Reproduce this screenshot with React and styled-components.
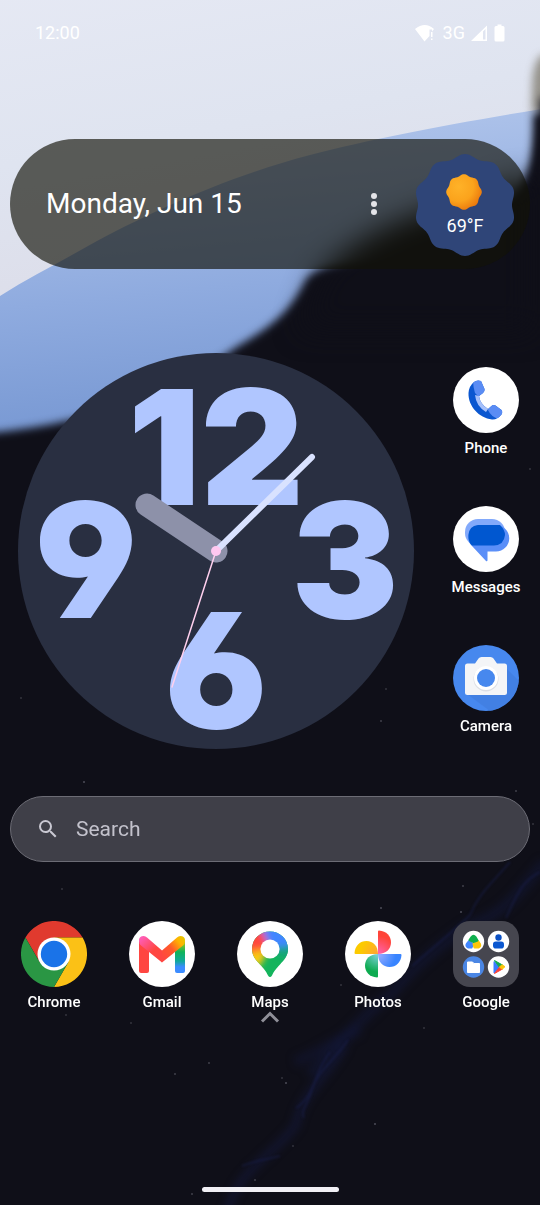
import styled, { createGlobalStyle } from "styled-components";

const GlobalStyle = createGlobalStyle`
  * {
    box-sizing: border-box;
  }
  body {
    margin: 0;
    background: #0f0f18;
    color: #fff;
    font-family: Roboto, "Liberation Sans", sans-serif;
  }
  button {
    font: inherit;
    color: inherit;
    background: none;
    border: none;
    padding: 0;
    cursor: pointer;
  }
`;

// rounded "cookie" outline: a circle whose radius waves a few times per turn
function cookiePath(cx, cy, radius, wave, bumps) {
  const points = [];
  for (let deg = 0; deg < 360; deg += 2) {
    const a = (deg * Math.PI) / 180;
    const r = radius + wave * Math.cos(bumps * a);
    points.push(
      `${(cx + r * Math.sin(a)).toFixed(2)} ${(cy - r * Math.cos(a)).toFixed(2)}`
    );
  }
  return `M${points.join("L")}Z`;
}

const stars = [
  [84, 782, 0.5],
  [516, 791, 0.4],
  [381, 908, 0.5],
  [463, 886, 0.4],
  [62, 889, 0.3],
  [341, 985, 0.3],
  [66, 1015, 0.3],
  [131, 1023, 0.3],
  [209, 1063, 0.4],
  [175, 1074, 0.4],
  [282, 1078, 0.3],
  [286, 1083, 0.5],
  [375, 1124, 0.5],
  [293, 1146, 0.3],
  [255, 1180, 0.4],
  [192, 1194, 0.4],
  [461, 912, 0.5],
  [386, 689, 0.3],
  [381, 721, 0.4],
  [21, 698, 0.3],
  [530, 469, 0.3],
  [424, 1028, 0.3],
  [533, 824, 0.3],
];

function Blur({ id, amount }) {
  return (
    <filter
      id={id}
      filterUnits="userSpaceOnUse"
      x="-40"
      y="-40"
      width="620"
      height="1285"
      colorInterpolationFilters="sRGB"
    >
      <feGaussianBlur stdDeviation={amount} />
    </filter>
  );
}

function Wallpaper() {
  return (
    <Backdrop
      viewBox="0 0 540 1205"
      preserveAspectRatio="xMidYMin slice"
      aria-hidden="true"
    >
      <defs>
        <linearGradient id="sky" x1="0" y1="0" x2="0.3" y2="1">
          <stop offset="0" stopColor="#e6e9f4" />
          <stop offset="0.5" stopColor="#dfe4f0" />
          <stop offset="1" stopColor="#dcdce8" />
        </linearGradient>
        <linearGradient id="ridge" x1="0.4" y1="0" x2="0.55" y2="1">
          <stop offset="0" stopColor="#b3c7ec" />
          <stop offset="0.45" stopColor="#8fabdf" />
          <stop offset="0.75" stopColor="#7a9ad4" />
          <stop offset="1" stopColor="#6787c6" />
        </linearGradient>
        <Blur id="soft1" amount="1" />
        <Blur id="soft4" amount="4" />
        <Blur id="soft14" amount="14" />
      </defs>
      <rect width="540" height="1205" fill="#0f0f18" />
      <path
        d="M-20 -20H560V108L528 112L280 240L0 330H-20Z"
        fill="url(#sky)"
      />
      <path
        d="M-20 306L0 296C30 277 60 262 88 246C150 212 230 176 310 155C380 137 460 122 560 106V500H-20Z"
        fill="url(#ridge)"
      />
      <path
        d="M590 108L533 114C534 146 531 166 522 182C500 222 440 250 390 262C350 266 318 264 306 280C290 312 272 326 238 346C190 380 100 428 -30 434V1230H590Z"
        fill="#0f0f18"
        filter="url(#soft4)"
      />
      <path
        d="M322 272C380 212 460 205 530 176V330H300Z"
        fill="#0f0f18"
        filter="url(#soft14)"
      />
      <path
        d="M590 44L540 56C529 72 534 90 531 110L590 116Z"
        fill="#746e5e"
        opacity="0.7"
        filter="url(#soft4)"
      />
      <path
        d="M590 90L541 98L535 180H590Z"
        fill="#10101a"
        filter="url(#soft4)"
      />
      <g fill="none" stroke="#151a42" filter="url(#soft4)">
        <path
          d="M545 862C520 890 505 915 470 925C440 945 415 965 395 990C365 1015 340 1040 310 1075"
          strokeWidth="10"
          opacity="0.45"
        />
        <path
          d="M345 1045C325 1080 300 1095 296 1125C270 1160 240 1165 226 1215"
          strokeWidth="7"
          opacity="0.6"
        />
        <path d="M360 1030C335 1040 315 1055 295 1062" strokeWidth="10" opacity="0.4" />
      </g>
      <g fill="none" stroke="#1b2358" strokeWidth="2" filter="url(#soft1)">
        <path
          d="M540 872C520 882 515 900 506 918M510 862C490 885 478 895 470 915C455 930 430 950 412 966"
          opacity="0.4"
        />
        <path
          d="M348 1040C335 1060 318 1070 312 1090C308 1105 300 1110 304 1118M330 1052C312 1075 316 1095 296 1108"
          opacity="0.4"
        />
        <path d="M280 1156C265 1160 256 1160 242 1166" opacity="0.4" />
      </g>
      {stars.map(([x, y, opacity]) => (
        <circle
          key={`${x}-${y}`}
          cx={x}
          cy={y}
          r="1"
          fill="#8a8a96"
          opacity={opacity}
        />
      ))}
    </Backdrop>
  );
}

function StatusIcons() {
  return (
    <StatusGroup>
      <svg width="22" height="18" viewBox="0 0 22 18" fill="#fff">
        <path d="M0 5Q10 -3 19 5L17 7.400V5.500H14.500V12L9.500 17.500Z" />
        <path d="M16 8h1.500v5H16zM16 14.500h1.500V16H16z" />
      </svg>
      <StatusText>3G</StatusText>
      <svg width="16" height="18" viewBox="0 0 16 18" fill="#fff">
        <path d="M16 1.500V17H0ZM14.500 5L12 7.600V15.500H14.500Z" fillRule="evenodd" />
      </svg>
      <svg width="12" height="18" viewBox="0 0 12 18" fill="#fff">
        <path d="M4.500 0.500H8.500V2H10Q11.500 2 11.500 3.500V16Q11.500 17.500 10 17.500H3Q1.500 17.500 1.500 16V3.500Q1.500 2 3 2H4.500Z" />
      </svg>
    </StatusGroup>
  );
}

function Weather() {
  return (
    <WeatherBadge aria-label="Weather, 69 degrees">
      <CookieShape viewBox="0 0 100 100" aria-hidden="true">
        <defs>
          <radialGradient id="sun" cx="0.35" cy="0.35" r="0.75">
            <stop offset="0" stopColor="#ffb228" />
            <stop offset="0.55" stopColor="#fba31c" />
            <stop offset="1" stopColor="#e8710a" />
          </radialGradient>
        </defs>
        <path d={cookiePath(50, 51, 49, 2, 10)} fill="#2f4578" />
        <path d={cookiePath(49, 38, 17, 0.8, 8)} fill="url(#sun)" />
      </CookieShape>
      <Temperature>69°F</Temperature>
    </WeatherBadge>
  );
}

function Clock() {
  return (
    <ClockFace viewBox="0 0 396 396" role="img" aria-label="Clock">
      <circle cx="198" cy="198" r="198" fill="#292f41" />
      <Numerals>
        <text x="198" y="152">
          12
        </text>
        <text x="327" y="265">
          3
        </text>
        <text x="198" y="375">
          6
        </text>
        <text x="68" y="265">
          9
        </text>
      </Numerals>
      <g strokeLinecap="round">
        <path d="M198 198L129 152" stroke="#8d91a9" strokeWidth="23" />
        <path d="M198 198L294 104" stroke="#d9e2ff" strokeWidth="6" />
        <path d="M198 198L154 334" stroke="#ffd0ee" strokeWidth="1.500" />
      </g>
      <circle cx="198" cy="198" r="5" fill="#ffc8f0" />
    </ClockFace>
  );
}

function PhoneIcon() {
  const handset =
    "M21 15Q24 12.500 28 14L31.500 22Q32 24 30 26L26 29Q27 37 35 42L38.500 39Q40 37.500 42.500 38.500L48.500 43Q50 45 48.500 47.500Q44 53 39 52.500C26 51 15 39 15.500 26Q16 19 21 15Z";
  return (
    <AppSvg viewBox="0 0 66 66">
      <defs>
        <clipPath id="handset">
          <path d={handset} />
        </clipPath>
      </defs>
      <circle cx="33" cy="33" r="33" fill="#fff" />
      <path d={handset} fill="#0b57d0" />
      <g clipPath="url(#handset)">
        <path d="M20 12H34V26L26 30L22 26Q20 20 20 12Z" fill="#5a8cf4" />
        <path d="M38 36L52 42V52L46 52Q38 50 35 43Z" fill="#5a8cf4" />
      </g>
      <path d="M22 28L26 29Q27 37 35 42L33 45Q23 39 22 28Z" fill="#a6c0fa" />
    </AppSvg>
  );
}

function MessagesIcon() {
  return (
    <AppSvg viewBox="0 0 66 66">
      <circle cx="33" cy="33" r="33" fill="#fff" />
      <rect x="12" y="13" width="40" height="27" rx="13" fill="#82a9fb" />
      <path
        d="M28 19H43A13 13 0 0 1 43 45.500H34.500V54Q34.500 56 33 55L19 40A12 12 0 0 1 28 19Z"
        fill="#5b8ff8"
      />
      <path
        d="M25 19H47Q52 24 52 29Q51 39 41 39.500H19Q15 36 15.500 29Q16 20 25 19Z"
        fill="#0057d0"
      />
    </AppSvg>
  );
}

function CameraIcon() {
  return (
    <AppSvg viewBox="0 0 66 66">
      <circle cx="33" cy="33" r="33" fill="#4788ee" />
      <path d="M54 24L66 36Q62 60 37 66L14 49Z" fill="#3f7cdc" opacity="0.600" />
      <path
        d="M14.500 18.500H22L25.500 13.500Q26.500 12 28.500 12H37.500Q39.500 12 40.500 13.500L44 18.500H51.500Q54 18.500 54 21V47.500Q54 50 51.500 50H14.500Q12 50 12 47.500V21Q12 18.500 14.500 18.500Z"
        fill="#f4f5f7"
      />
      <circle cx="33" cy="34" r="12.500" fill="#dcdfe5" />
      <circle cx="33" cy="33" r="12" fill="#fff" />
      <circle cx="33" cy="33" r="9" fill="#4788ee" />
    </AppSvg>
  );
}

function ChromeIcon() {
  return (
    <AppSvg viewBox="0 0 66 66">
      <path d="M4.400 16.500A33 33 0 0 1 61.600 16.500H33V33L18.700 41.250Z" fill="#e03a2e" />
      <path d="M61.600 16.500A33 33 0 0 1 33 66L47.300 41.250L33 33V16.500Z" fill="#fbc116" />
      <path d="M33 66A33 33 0 0 1 4.400 16.500L18.700 41.250L33 33L47.300 41.250Z" fill="#2a9644" />
      <circle cx="33" cy="33" r="16.500" fill="#fff" />
      <circle cx="33" cy="33" r="13.200" fill="#1a73e8" />
    </AppSvg>
  );
}

function GmailIcon() {
  return (
    <AppSvg viewBox="0 0 66 66">
      <defs>
        <linearGradient id="gmLeft" x1="11" y1="16" x2="24" y2="30" gradientUnits="userSpaceOnUse">
          <stop offset="0" stopColor="#ff5fc0" />
          <stop offset="1" stopColor="#ff4641" />
        </linearGradient>
        <linearGradient id="gmRight" x1="33" y1="36" x2="55" y2="18" gradientUnits="userSpaceOnUse">
          <stop offset="0" stopColor="#ff4641" />
          <stop offset="0.45" stopColor="#ff5a2a" />
          <stop offset="0.8" stopColor="#ffb400" />
          <stop offset="1" stopColor="#e8c400" />
        </linearGradient>
        <linearGradient id="gmBar" x1="0" y1="22" x2="0" y2="52" gradientUnits="userSpaceOnUse">
          <stop offset="0" stopColor="#9cc41c" />
          <stop offset="0.3" stopColor="#0fb45a" />
          <stop offset="0.6" stopColor="#10a99a" />
          <stop offset="0.8" stopColor="#3c8cff" />
        </linearGradient>
      </defs>
      <circle cx="33" cy="33" r="33" fill="#fff" />
      <path d="M46 24L56 20V50Q56 52 54 52H48Q46 52 46 50Z" fill="url(#gmBar)" />
      <path d="M10 20L20 24V50Q20 52 18 52H12Q10 52 10 50Z" fill="#ff4641" />
      <path
        d="M33 29.500L48 16.500A4.600 4.600 0 0 1 56 20Q56 23 54 24.500L33 41.500L30 35Z"
        fill="url(#gmRight)"
      />
      <path
        d="M33 29.500L18 16.500A4.600 4.600 0 0 0 10 20Q10 23 12 24.500L33 41.500Z"
        fill="url(#gmLeft)"
      />
    </AppSvg>
  );
}

function MapsIcon() {
  return (
    <AppSvg viewBox="0 0 66 66">
      <defs>
        <clipPath id="pin">
          <path d="M33 10.500C43 10.500 51 18 51 28C51 35 47 39 43 43.500C39 48 37 50 35 54.500Q33 57.500 31 54.500C29 50 27 48 23 43.500C19 39 15 35 15 28C15 18 23 10.500 33 10.500Z" />
        </clipPath>
        <filter id="pinBlend" x="-50%" y="-50%" width="200%" height="200%">
          <feGaussianBlur stdDeviation="3" />
        </filter>
      </defs>
      <circle cx="33" cy="33" r="33" fill="#fff" />
      <g clipPath="url(#pin)">
        <rect x="10" y="8" width="46" height="52" fill="#14b45c" />
        <g filter="url(#pinBlend)">
          <path d="M33 28L52 32L60 20V0H22L28 12Z" fill="#3f86ff" />
          <path d="M33 28L58 24V38L44 36Z" fill="#12a47c" />
          <path d="M33 28L27 0L20 8L27 18Z" fill="#8b6fe8" />
          <path d="M33 28L22 6L4 8V32H22Z" fill="#ff463c" />
          <path d="M33 28L24 27L8 29V36H22Z" fill="#ff8a1e" />
          <path d="M30 30L20 31L8 36V46L22 46L27 38Z" fill="#f8cb12" />
        </g>
      </g>
      <circle cx="33" cy="28" r="9.600" fill="#fff" />
    </AppSvg>
  );
}

const blades = [
  { angle: 0, outer: "#ff4438", inner: "#ff62a8" },
  { angle: 90, outer: "#3884ff", inner: "#93aaff" },
  { angle: 180, outer: "#0dab50", inner: "#74cfd0" },
  { angle: 270, outer: "#fcca00", inner: "#ffa630" },
];

function PhotosIcon() {
  return (
    <AppSvg viewBox="0 0 66 66">
      <circle cx="33" cy="33" r="33" fill="#fff" />
      {blades.map((blade) => (
        <g key={blade.angle} transform={`rotate(${blade.angle} 33 33)`}>
          <defs>
            <radialGradient
              id={`blade${blade.angle}`}
              cx="33"
              cy="33"
              r="18"
              gradientUnits="userSpaceOnUse"
            >
              <stop offset="0.1" stopColor={blade.inner} />
              <stop offset="1" stopColor={blade.outer} />
            </radialGradient>
          </defs>
          <path
            d="M33 10.500Q33 9.500 34 9.500C41.500 10 46 15 46 21.500C46 28 41 33 33 33Z"
            fill={`url(#blade${blade.angle})`}
          />
        </g>
      ))}
    </AppSvg>
  );
}

function GoogleFolderIcon() {
  return (
    <AppSvg viewBox="0 0 66 66">
      <rect width="66" height="66" rx="17" fill="#46464f" />
      <circle cx="20.500" cy="20.500" r="10.700" fill="#fff" />
      <circle cx="45.500" cy="20.500" r="10.700" fill="#fff" />
      <circle cx="20.500" cy="46" r="10.700" fill="#4a86e4" />
      <circle cx="45.500" cy="46" r="10.700" fill="#fff" />
      <g strokeLinejoin="round" strokeWidth="2">
        <path d="M16 20L20 23.500L18.500 26.500H15Q12.500 25 14 22.500Z" fill="#4187ff" stroke="#4187ff" />
        <path d="M25 20L27 23Q28 25.500 25.500 26.500H21.500L20.500 23Z" fill="#fcc60a" stroke="#fcc60a" />
        <path d="M18.500 16Q20.500 13.500 22.500 16L24.500 19.500L20.500 21L16.500 19Z" fill="#10b04f" stroke="#10b04f" />
      </g>
      <circle cx="45.500" cy="16.500" r="3.200" fill="#0b50c4" />
      <rect x="40" y="20.500" width="11" height="7" rx="2.800" fill="#0b57d0" />
      <path d="M14.500 41H19.500L21 42.500H26.500V51.500H14.500Z" fill="#fff" stroke="#fff" strokeLinejoin="round" />
      <path d="M41 40.500V52L47 46Z" fill="#3b7cff" stroke="#3b7cff" />
      <path d="M41.500 39.500L49.500 44L46.500 46.500Z" fill="#14ab53" stroke="#14ab53" />
      <path d="M41.500 52.500L49.500 48L46.500 46Z" fill="#fb4137" stroke="#fb4137" />
      <path d="M49 43.700L52 45.700L49 48.300L46.500 46Z" fill="#fcc60a" stroke="#fcc60a" />
    </AppSvg>
  );
}

const sideApps = [
  { name: "Phone", Icon: PhoneIcon },
  { name: "Messages", Icon: MessagesIcon },
  { name: "Camera", Icon: CameraIcon },
];

const dockApps = [
  { name: "Chrome", Icon: ChromeIcon },
  { name: "Gmail", Icon: GmailIcon },
  { name: "Maps", Icon: MapsIcon },
  { name: "Photos", Icon: PhotosIcon },
  { name: "Google", Icon: GoogleFolderIcon },
];

function AppShortcut({ app }) {
  const { name, Icon } = app;
  return (
    <AppButton type="button">
      <Icon />
      <AppLabel>{name}</AppLabel>
    </AppButton>
  );
}

export default function App() {
  return (
    <Screen>
      <GlobalStyle />
      <Wallpaper />
      <StatusBar>
        <StatusText>12:00</StatusText>
        <StatusIcons />
      </StatusBar>

      <DateWidget>
        <DateText>Monday, Jun 15</DateText>
        <MoreButton type="button" aria-label="More options">
          <svg width="8" height="22" viewBox="0 0 8 22" fill="#e4e4e8">
            <circle cx="4" cy="3" r="3" />
            <circle cx="4" cy="11" r="3" />
            <circle cx="4" cy="19" r="3" />
          </svg>
        </MoreButton>
        <Weather />
      </DateWidget>

      <Workspace>
        <ClockCell>
          <Clock />
        </ClockCell>
        {sideApps.map((app) => (
          <AppShortcut key={app.name} app={app} />
        ))}
      </Workspace>

      <SearchBar>
        <svg width="24" height="24" viewBox="0 0 24 24" fill="#c9c8d2" aria-hidden="true">
          <path d="M15.500 14h-.79l-.28-.27A6.470 6.470 0 0 0 16 9.500 6.500 6.500 0 1 0 9.500 16c1.610 0 3.090-.59 4.230-1.570l.27.28v.79l5 4.990L20.490 19l-4.990-5zm-6 0C7.010 14 5 11.990 5 9.500S7.010 5 9.500 5 14 7.010 14 9.500 11.990 14 9.500 14z" />
        </svg>
        <SearchInput type="text" placeholder="Search" aria-label="Search" />
      </SearchBar>

      <Dock>
        {dockApps.map((app) => (
          <AppShortcut key={app.name} app={app} />
        ))}
      </Dock>

      <DrawerButton type="button" aria-label="All apps">
        <svg width="20" height="12" viewBox="0 0 20 12" fill="none">
          <path d="M2 10.500L10 2.500L18 10.500" stroke="#8f8f98" strokeWidth="3" />
        </svg>
      </DrawerButton>
      <HomeHandle />
    </Screen>
  );
}

const Screen = styled.main`
  position: relative;
  display: flex;
  flex-direction: column;
  min-height: 100vh;
  overflow: hidden;
  isolation: isolate;
`;

const Backdrop = styled.svg`
  position: absolute;
  inset: 0;
  width: 100%;
  height: 100%;
  z-index: -1;
`;

const StatusBar = styled.header`
  display: flex;
  align-items: center;
  justify-content: space-between;
  height: 66px;
  padding: 0 35px;
`;

const StatusGroup = styled.div`
  display: flex;
  align-items: center;
  gap: 6px;
`;

const StatusText = styled.span`
  font-size: 18px;
  line-height: 24px;
`;

const DateWidget = styled.section`
  display: flex;
  align-items: center;
  height: 130px;
  margin: 73px 10px;
  padding: 0 15px 0 36px;
  border-radius: 65px;
  background: rgba(18, 18, 8, 0.66);
`;

const DateText = styled.span`
  flex: 1;
  font-size: 28px;
  line-height: 32px;
`;

const MoreButton = styled.button`
  display: flex;
  justify-content: center;
  width: 48px;
  margin-right: 17px;
`;

const WeatherBadge = styled.button`
  display: grid;
  justify-items: center;
  align-items: end;
  width: 100px;
  height: 100px;
`;

const CookieShape = styled.svg`
  grid-area: 1 / 1;
  width: 100px;
  height: 100px;
  overflow: visible;
`;

const Temperature = styled.span`
  grid-area: 1 / 1;
  padding-bottom: 17px;
  font-size: 18px;
  line-height: 22px;
  z-index: 1;
`;

const Workspace = styled.section`
  display: grid;
  grid-template-columns: repeat(5, 1fr);
  grid-template-rows: repeat(3, 139px);
  align-items: center;
`;

const ClockCell = styled.div`
  grid-column: 1 / 5;
  grid-row: 1 / 4;
  display: flex;
  justify-content: center;
  padding: 0 18px;
`;

const ClockFace = styled.svg`
  width: 100%;
  max-width: 396px;
`;

const Numerals = styled.g`
  fill: #b0c6ff;
  font-family: Inter, "Noto Sans", sans-serif;
  font-size: 160px;
  font-weight: 900;
  font-feature-settings: "cv03", "cv04";
  text-anchor: middle;
`;

const AppButton = styled.button`
  display: flex;
  flex-direction: column;
  align-items: center;
  gap: 6px;
`;

const AppSvg = styled.svg`
  width: 66px;
  height: 66px;
`;

const AppLabel = styled.span`
  font-size: 15px;
  font-weight: 500;
  line-height: 18px;
`;

const SearchBar = styled.label`
  display: flex;
  align-items: center;
  gap: 16px;
  height: 66px;
  margin: 37px 10px 0;
  padding: 0 25px;
  border: 1px solid #6c6c75;
  border-radius: 33px;
  background: #3f3f48;
`;

const SearchInput = styled.input`
  flex: 1;
  min-width: 0;
  padding: 0;
  border: none;
  outline: none;
  background: none;
  color: #fff;
  font-family: inherit;
  font-size: 21px;
  line-height: 24px;

  &::placeholder {
    color: #c3c2cc;
    opacity: 1;
  }
`;

const Dock = styled.nav`
  display: grid;
  grid-template-columns: repeat(5, 1fr);
  margin-top: 59px;
`;

const DrawerButton = styled.button`
  display: flex;
  align-self: center;
`;

const HomeHandle = styled.div`
  align-self: center;
  width: 137px;
  height: 5px;
  margin: auto 0 13px;
  border-radius: 3px;
  background: #f1f0f5;
`;
